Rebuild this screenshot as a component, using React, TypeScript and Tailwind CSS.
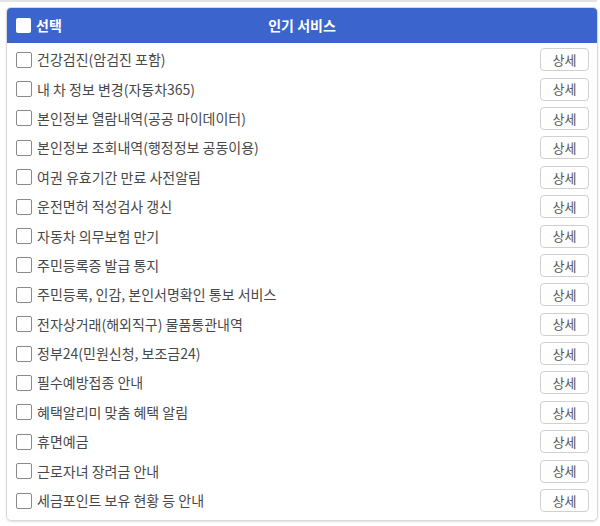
const services = [
  "건강검진(암검진 포함)",
  "내 차 정보 변경(자동차365)",
  "본인정보 열람내역(공공 마이데이터)",
  "본인정보 조회내역(행정정보 공동이용)",
  "여권 유효기간 만료 사전알림",
  "운전면허 적성검사 갱신",
  "자동차 의무보험 만기",
  "주민등록증 발급 통지",
  "주민등록, 인감, 본인서명확인 통보 서비스",
  "전자상거래(해외직구) 물품통관내역",
  "정부24(민원신청, 보조금24)",
  "필수예방접종 안내",
  "혜택알리미 맞춤 혜택 알림",
  "휴면예금",
  "근로자녀 장려금 안내",
  "세금포인트 보유 현황 등 안내",
];

export default function App() {
  return (
    <div
      className="h-[526px] w-[600px] bg-white"
      style={{ fontFamily: '"Noto Sans CJK KR", "Noto Sans", sans-serif' }}
    >
      <div className="h-[2px] w-[597px] bg-[#e4e4e4]" />
      <div className="ml-[6px] mt-[5px] w-[592px] overflow-hidden rounded-[5px] border border-[#d9d9d9] shadow-[0_1px_2px_rgba(0,0,0,0.12)]">
        <div className="grid h-[35px] grid-cols-[1fr_auto_1fr] items-center bg-[#3b65cc] text-[14px] font-bold text-white">
          <label className="flex items-center gap-[5px] pl-[9px]">
            <span className="h-[15px] w-[15px] rounded-[2px] bg-white" />
            선택
          </label>
          <span>인기 서비스</span>
          <span />
        </div>
        <ul className="pb-[5px] pt-[2px]">
          {services.map((s) => (
            <li key={s} className="flex h-[29.4px] items-center justify-between pl-[9px] pr-[8px]">
              <label className="flex items-center gap-[5px] text-[14px] text-[#484848]">
                <span className="h-[16px] w-[16px] rounded-[2px] border border-[#8a8a8a] bg-white" />
                {s}
              </label>
              <button
                type="button"
                className="flex h-[23px] w-[49px] items-center justify-center rounded-[4px] border border-[#d0d0d0] bg-white text-[13px] text-[#555]"
              >
                상세
              </button>
            </li>
          ))}
        </ul>
      </div>
    </div>
  );
}
